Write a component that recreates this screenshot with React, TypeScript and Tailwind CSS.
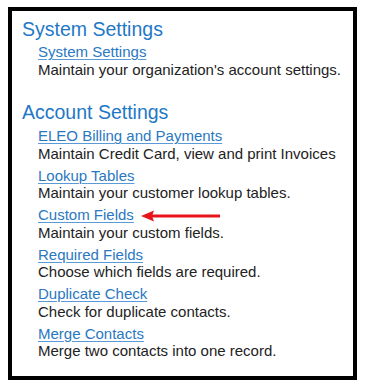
type SettingLink = {
  label: string;
  note: string;
  marked?: boolean;
};

const accountLinks: SettingLink[] = [
  { label: "ELEO Billing and Payments", note: "Maintain Credit Card, view and print Invoices" },
  { label: "Lookup Tables", note: "Maintain your customer lookup tables." },
  { label: "Custom Fields", note: "Maintain your custom fields.", marked: true },
  { label: "Required Fields", note: "Choose which fields are required." },
  { label: "Duplicate Check", note: "Check for duplicate contacts." },
  { label: "Merge Contacts", note: "Merge two contacts into one record." },
];

function RedArrow() {
  return (
    <svg className="ml-[7px] translate-y-[1px]" width="80" height="12" viewBox="0 0 80 12">
      <path d="M11 4.5 H79 V7.5 H11 Z" fill="#e8141c" />
      <path d="M0 6 L13 0.5 L11 6 L13 11.5 Z" fill="#e8141c" />
    </svg>
  );
}

function LinkRow({ label, note, marked }: SettingLink) {
  return (
    <div className="pl-[16px] text-[15px] leading-[17.5px]">
      <div className="flex items-center">
        <a
          href="#"
          className="text-[#2a78c2] underline decoration-[#5a9ad6] decoration-1 underline-offset-[2px]"
        >
          {label}
        </a>
        {marked && <RedArrow />}
      </div>
      <p className="text-[#222]">{note}</p>
    </div>
  );
}

export default function App() {
  return (
    <div className="min-h-[386px] bg-white pl-[8px] pt-[7px] font-['Liberation_Sans',Arial,sans-serif]">
      <div className="h-[373px] w-[349px] border-4 border-black pl-[10px] pt-[7px]">
        <h2 className="text-[19.5px] leading-[22px] text-[#1f78c6]">System Settings</h2>
        <div className="mt-[3px]">
          <LinkRow label="System Settings" note="Maintain your organization's account settings." />
        </div>

        <h2 className="mt-[23px] text-[19.5px] leading-[22px] text-[#1f78c6]">Account Settings</h2>
        <div className="mt-[4px] flex flex-col gap-[4.5px]">
          {accountLinks.map((item) => (
            <LinkRow key={item.label} {...item} />
          ))}
        </div>
      </div>
    </div>
  );
}
